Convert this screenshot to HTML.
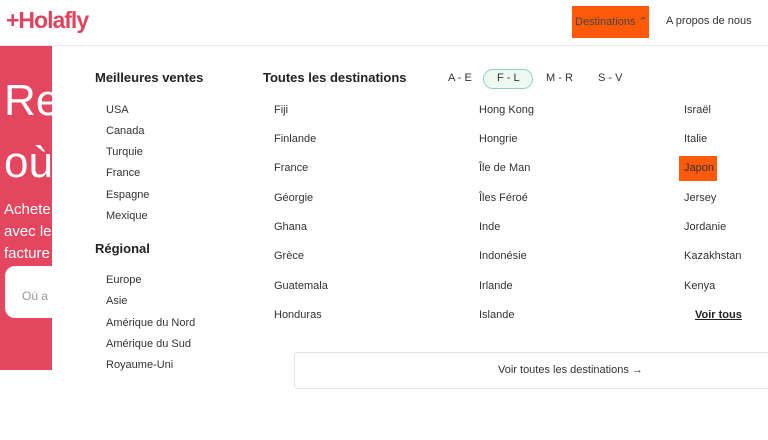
<!DOCTYPE html>
<html><head><meta charset="utf-8"><style>
*{margin:0;padding:0;box-sizing:border-box}
body{width:768px;height:440px;background:#fff;position:relative;overflow:hidden;font-family:"Liberation Sans",sans-serif;color:#333}
.a{position:absolute;white-space:nowrap}
.it{font-size:11px;color:#333}
.h{font-size:13px;font-weight:bold;color:#222}
</style></head><body>
<div class="a" style="left:6px;top:7px;font-size:23px;color:#e0435e;font-weight:bold;letter-spacing:-1px">+Holafly</div>
<div class="a" style="left:0;top:45px;width:768px;height:1px;background:#e8e8e8"></div>
<div class="a" style="left:572px;top:6px;width:77px;height:32px;background:#ff5a0a"></div>
<div class="a it" style="left:575px;top:15px;color:#444">Destinations ⌃</div>
<div class="a it" style="left:666px;top:15px;color:#333">A propos de nous</div>
<div class="a" style="left:0;top:46px;width:52px;height:324px;background:#e4465f;overflow:hidden">
 <div class="a" style="left:4px;top:30px;font-size:44px;color:#fff;font-weight:300">Re</div>
 <div class="a" style="left:4px;top:92px;font-size:44px;color:#fff;font-weight:300">où</div>
 <div class="a" style="left:4px;top:153px;font-size:15px;color:#fff;line-height:22px">Achete<br>avec le<br>facture</div>
 <div class="a" style="left:5px;top:220px;width:60px;height:52px;background:#fff;border-radius:10px"></div>
 <div class="a" style="left:22px;top:243px;font-size:12px;color:#999">Où a</div>
</div>
<div class="a h" style="left:95px;top:70px">Meilleures ventes</div>
<div class="a it" style="left:106px;top:104px">USA</div>
<div class="a it" style="left:106px;top:125px">Canada</div>
<div class="a it" style="left:106px;top:146px">Turquie</div>
<div class="a it" style="left:106px;top:167px">France</div>
<div class="a it" style="left:106px;top:189px">Espagne</div>
<div class="a it" style="left:106px;top:210px">Mexique</div>
<div class="a h" style="left:95px;top:241px">Régional</div>
<div class="a it" style="left:106px;top:274px">Europe</div>
<div class="a it" style="left:106px;top:295px">Asie</div>
<div class="a it" style="left:106px;top:317px">Amérique du Nord</div>
<div class="a it" style="left:106px;top:338px">Amérique du Sud</div>
<div class="a it" style="left:106px;top:359px">Royaume-Uni</div>
<div class="a h" style="left:263px;top:70px">Toutes les destinations</div>
<div class="a it" style="left:448px;top:72px">A - E</div>
<div class="a" style="left:483px;top:69px;width:50px;height:20px;border:1px solid #8fd3b8;border-radius:10px;background:#eef9f4"></div>
<div class="a it" style="left:497px;top:72px">F - L</div>
<div class="a it" style="left:546px;top:72px">M - R</div>
<div class="a it" style="left:598px;top:72px">S - V</div>
<div class="a" style="left:679px;top:156px;width:38px;height:25px;background:#ff5a0a"></div>
<div class="a it" style="left:274px;top:104px">Fiji</div>
<div class="a it" style="left:274px;top:133px">Finlande</div>
<div class="a it" style="left:274px;top:162px">France</div>
<div class="a it" style="left:274px;top:192px">Géorgie</div>
<div class="a it" style="left:274px;top:221px">Ghana</div>
<div class="a it" style="left:274px;top:250px">Grèce</div>
<div class="a it" style="left:274px;top:280px">Guatemala</div>
<div class="a it" style="left:274px;top:309px">Honduras</div>
<div class="a it" style="left:479px;top:104px">Hong Kong</div>
<div class="a it" style="left:479px;top:133px">Hongrie</div>
<div class="a it" style="left:479px;top:162px">Île de Man</div>
<div class="a it" style="left:479px;top:192px">Îles Féroé</div>
<div class="a it" style="left:479px;top:221px">Inde</div>
<div class="a it" style="left:479px;top:250px">Indonésie</div>
<div class="a it" style="left:479px;top:280px">Irlande</div>
<div class="a it" style="left:479px;top:309px">Islande</div>
<div class="a it" style="left:684px;top:104px">Israël</div>
<div class="a it" style="left:684px;top:133px">Italie</div>
<div class="a it" style="left:684px;top:162px">Japon</div>
<div class="a it" style="left:684px;top:192px">Jersey</div>
<div class="a it" style="left:684px;top:221px">Jordanie</div>
<div class="a it" style="left:684px;top:250px">Kazakhstan</div>
<div class="a it" style="left:684px;top:280px">Kenya</div>
<div class="a it" style="left:695px;top:309px;font-weight:bold;text-decoration:underline;color:#222">Voir tous</div>
<div class="a" style="left:294px;top:352px;width:490px;height:37px;border:1px solid #e3e3e3;border-radius:3px"></div>
<div class="a it" style="left:498px;top:364px">Voir toutes les destinations →</div>
</body></html>
